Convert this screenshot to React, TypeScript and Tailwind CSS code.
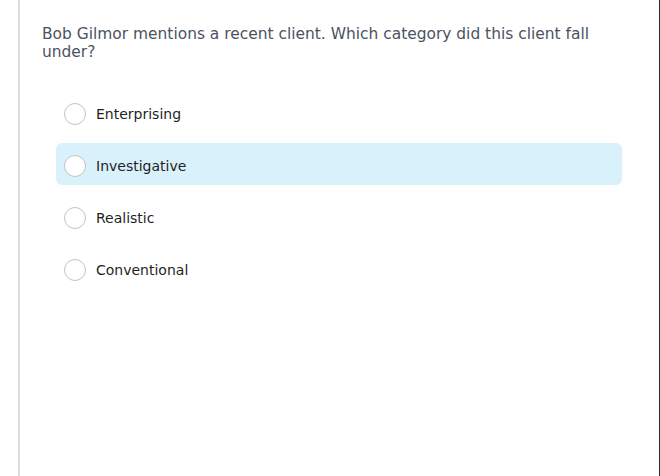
import { useState } from 'react';

const opciones = ['Enterprising', 'Investigative', 'Realistic', 'Conventional'];

export default function App() {
  const [hover] = useState(1);

  return (
    <div className="h-[476px] w-[660px] bg-white flex font-['DejaVu_Sans',sans-serif]">
      <div className="w-[18px]" />
      <div className="w-[2px] bg-[#dcdcdc]" />
      <div className="flex-1 border-r border-[#2b2b2b] pl-[22px] pr-[37px] pt-[25px]">
        {/* Pregunta */}
        <p className="text-[15.45px] leading-[18px] text-[#4b5262]">
          Bob Gilmor mentions a recent client. Which category did this client fall under?
        </p>

        {/* Opciones */}
        <div className="mt-[30px] ml-[14px] flex flex-col gap-[10px]">
          {opciones.map((op, i) => (
            <label
              key={op}
              className={`h-[42px] flex items-center gap-[10px] pl-[8px] rounded-[6px] ${
                i === hover ? 'bg-[#d9f1fb]' : ''
              }`}
            >
              <span className="w-[22px] h-[22px] mt-[4px] rounded-full bg-white border border-[#c3c3c3]" />
              <span className="text-[14px] text-[#1f1f1f] pt-[5px]">{op}</span>
            </label>
          ))}
        </div>
      </div>
    </div>
  );
}
